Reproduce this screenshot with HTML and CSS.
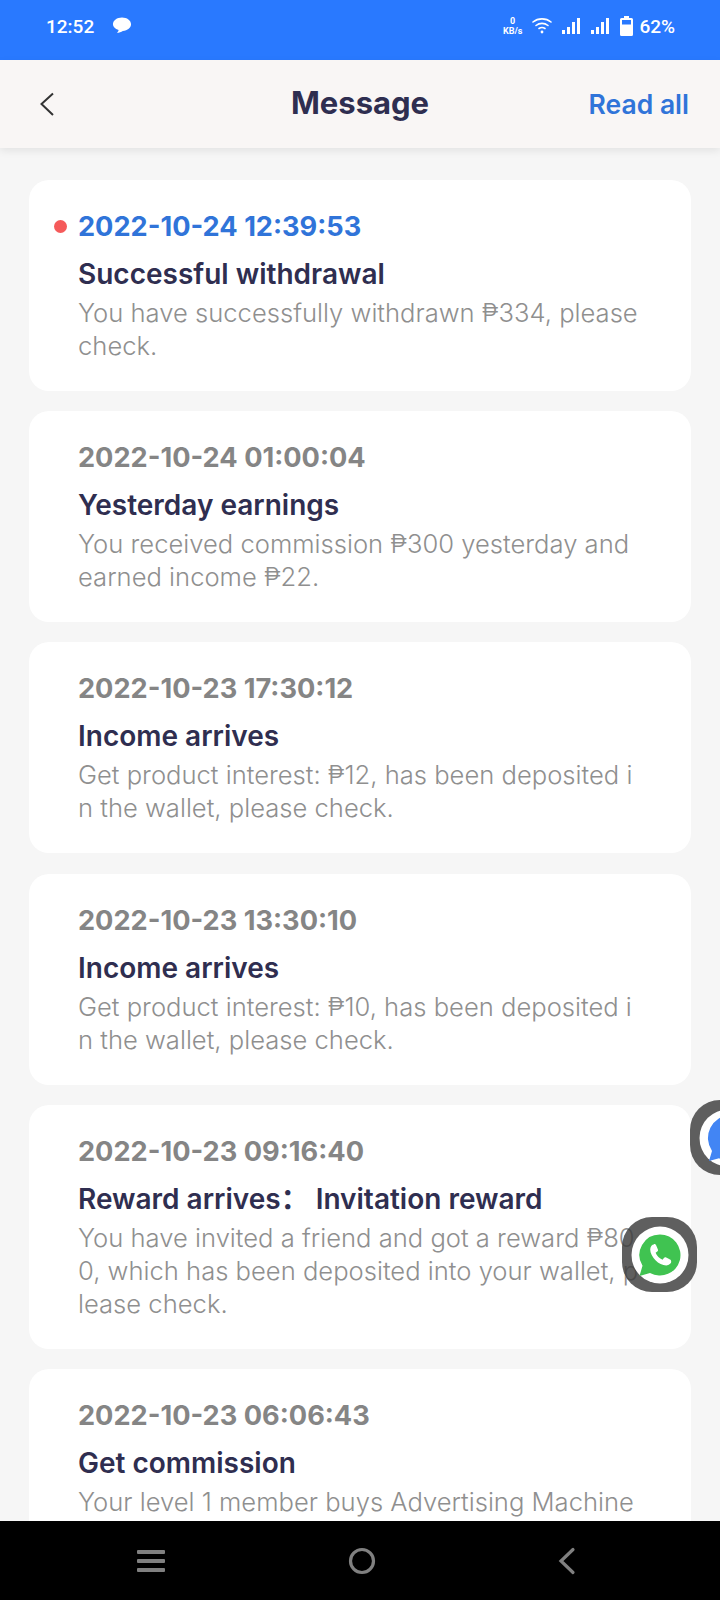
FILE: index.html
```html
<!DOCTYPE html>
<html lang="en">
<head>
    <meta charset="UTF-8">
    <meta name="viewport" content="width=device-width, initial-scale=1.0">
    <title>Message</title>
    <link rel="stylesheet" href="styles.css">
</head>
<body>
    <div class="screen">
        <div class="status-bar">
            <div class="status-left">
                <span class="clock">12:52</span>
                <svg class="chat-icon" width="20" height="19" viewBox="0 0 21 19"><path d="M10.500 1C15.700 1 20 4 20 8.200c0 3.600-3.600 6.600-8.600 7-1.800 1-3.800 1.800-6.200 2 1-.9 1.600-2 1.800-3C3 13 1 10.800 1 8.200 1 4 5.300 1 10.500 1z" fill="#fff"/></svg>
            </div>
            <div class="status-right">
                <span class="net-speed"><b>0</b><b>KB/s</b></span>
                <svg class="wifi-icon" width="20" height="18" viewBox="0 0 20 18" fill="none" stroke="#fff" stroke-width="1.600" stroke-linecap="round"><path d="M1 5C6 .8 14 .8 19 5"/><path d="M4 8.500C7.500 5.700 12.500 5.700 16 8.500"/><path d="M7 11.500c1.800-1.200 4.200-1.200 6 0"/><circle cx="10" cy="15" r="1.400" fill="#fff" stroke="none"/></svg>
                <svg class="signal-icon" width="19" height="18" viewBox="0 0 19 18" fill="#fff"><rect x="0" y="13" width="3" height="4"/><rect x="5" y="10" width="3" height="7"/><rect x="10" y="5" width="3" height="12"/><rect x="15" y="1" width="3" height="16"/></svg>
                <svg class="signal-icon" width="19" height="18" viewBox="0 0 19 18" fill="#fff"><rect x="0" y="13" width="3" height="4"/><rect x="5" y="10" width="3" height="7"/><rect x="10" y="5" width="3" height="12"/><rect x="15" y="1" width="3" height="16"/></svg>
                <svg class="battery-icon" width="13" height="20" viewBox="0 0 13 20"><path d="M4 0h5v2h2.500A1.500 1.500 0 0 1 13 3.500V18.500A1.500 1.500 0 0 1 11.500 20h-10A1.500 1.500 0 0 1 0 18.500V3.500A1.500 1.500 0 0 1 1.500 2H4z" fill="#fff"/><rect x="2" y="4" width="9" height="4.500" fill="#2979ff"/></svg>
                <span class="battery-text">62%</span>
            </div>
        </div>

        <div class="nav-bar">
            <svg class="back-icon" width="16" height="26" viewBox="0 0 16 26" fill="none" stroke="#333" stroke-width="2"><path d="M14 2.500L2.500 13 14 24"/></svg>
            <h1 class="nav-title">Message</h1>
            <a class="read-all">Read all</a>
        </div>

        <div class="msg-list">
            <div class="msg-card">
                <div class="msg-time unread">2022-10-24 12:39:53</div>
                <div class="msg-title">Successful withdrawal</div>
                <div class="msg-body">You have successfully withdrawn ₱334, please check.</div>
            </div>
            <div class="msg-card">
                <div class="msg-time">2022-10-24 01:00:04</div>
                <div class="msg-title">Yesterday earnings</div>
                <div class="msg-body">You received commission ₱300 yesterday and earned income ₱22.</div>
            </div>
            <div class="msg-card">
                <div class="msg-time">2022-10-23 17:30:12</div>
                <div class="msg-title">Income arrives</div>
                <div class="msg-body">Get product interest: ₱12, has been deposited in the wallet, please check.</div>
            </div>
            <div class="msg-card">
                <div class="msg-time">2022-10-23 13:30:10</div>
                <div class="msg-title">Income arrives</div>
                <div class="msg-body">Get product interest: ₱10, has been deposited in the wallet, please check.</div>
            </div>
            <div class="msg-card">
                <div class="msg-time">2022-10-23 09:16:40</div>
                <div class="msg-title">Reward arrives： Invitation reward</div>
                <div class="msg-body">You have invited a friend and got a reward ₱800, which has been deposited into your wallet, please check.</div>
            </div>
            <div class="msg-card">
                <div class="msg-time">2022-10-23 06:06:43</div>
                <div class="msg-title">Get commission</div>
                <div class="msg-body">Your level 1 member buys Advertising Machine and the commission</div>
            </div>
        </div>

        <div class="float-btn float-chat">
            <svg width="58" height="58" viewBox="0 0 58 58"><circle cx="29" cy="29" r="28.500" fill="#fff"/><path d="M31 6a23 23 0 1 1-11 43.200L10 52l3-10A23 23 0 0 1 31 6z" fill="#4285f4"/><circle cx="34" cy="27" r="10" fill="#d8dde6"/></svg>
        </div>
        <div class="float-btn float-whatsapp">
            <svg width="58" height="58" viewBox="0 0 58 58"><circle cx="29" cy="29" r="28.500" fill="#fff"/><path d="M29 8.500a20.500 20.500 0 1 1-10 38.400L8.500 50l3-10.200A20.500 20.500 0 0 1 29 8.500z" fill="#40c351"/><path d="M22.800 18.500c-1.400 0-3.600 2-3.600 4.900 0 7.400 8.800 16 16 16 3 0 5-2.200 5-3.600 0-1.100-.4-1.800-1.200-2.200l-3.800-2c-.9-.5-1.700-.3-2.300.5l-1.300 1.700c-3.200-1.300-5.700-3.800-7-7l1.700-1.300c.8-.6 1-1.400.5-2.300l-1.800-4.200c-.5-.8-.9-1.100-1.900-1.100z" fill="#fff"/></svg>
        </div>

        <div class="bottom-bar">
            <svg width="28" height="22" viewBox="0 0 28 22" fill="#808080"><rect y="0" width="28" height="4" rx="1"/><rect y="9" width="28" height="4" rx="1"/><rect y="18" width="28" height="4" rx="1"/></svg>
            <svg width="28" height="28" viewBox="0 0 28 28" fill="none" stroke="#808080" stroke-width="3.200"><circle cx="14" cy="14" r="11.500"/></svg>
            <svg width="18" height="28" viewBox="0 0 18 28" fill="none" stroke="#808080" stroke-width="3.200" stroke-linecap="round"><path d="M15 2.500L3 14l12 11.500"/></svg>
        </div>
    </div>
</body>
</html>
```

FILE: styles.css
```css
html, body {
    margin: 0;
    padding: 0;
}
body {
    font-family: Inter, "Noto Sans CJK SC", sans-serif;
    background-color: #f6f6f6;
}
.screen {
    position: relative;
    width: 720px;
    height: 1600px;
    overflow: hidden;
    display: flex;
    flex-direction: column;
    background-color: #f6f6f6;
}
.status-bar {
    height: 60px;
    flex-shrink: 0;
    background-color: #2979ff;
    color: white;
    display: flex;
    justify-content: space-between;
    align-items: center;
    padding: 0 45px 8px 46px;
    box-sizing: border-box;
}
.status-left, .status-right {
    display: flex;
    align-items: center;
}
.clock {
    font-family: Roboto, sans-serif;
    font-size: 19px;
    font-weight: 500;
}
.chat-icon {
    margin-left: 18px;
    margin-bottom: 2px;
}
.net-speed {
    display: flex;
    flex-direction: column;
    align-items: center;
    font-family: Roboto, sans-serif;
    font-size: 9px;
    line-height: 10px;
    margin-right: 10px;
}
.wifi-icon {
    margin-right: 10px;
}
.signal-icon {
    margin-right: 10px;
}
.battery-icon {
    margin-right: 6px;
}
.battery-text {
    font-family: Roboto, sans-serif;
    font-size: 19px;
    font-weight: 500;
}
.nav-bar {
    position: relative;
    height: 88px;
    flex-shrink: 0;
    background-color: #f9f6f5;
    box-shadow: 0 3px 8px rgba(0, 0, 0, 0.08);
    display: grid;
    grid-template-columns: 1fr auto 1fr;
    align-items: center;
    padding: 0 31px;
}
.back-icon {
    margin-left: 8px;
}
.nav-title {
    margin: -3px 0 0;
    font-size: 31px;
    font-weight: 700;
    color: #2f2e50;
}
.read-all {
    justify-self: end;
    font-size: 26.500px;
    font-weight: 600;
    color: #3074d9;
}
.msg-list {
    padding: 32px 29px 0;
    display: flex;
    flex-direction: column;
    gap: 20.200px;
}
.msg-card {
    background: white;
    border-radius: 20px;
    padding: 31px 49px 29px;
}
.msg-time {
    position: relative;
    font-size: 27.200px;
    font-weight: 700;
    line-height: 32px;
    color: #858585;
}
.msg-time.unread {
    color: #3074d9;
}
.msg-time.unread::before {
    content: "";
    position: absolute;
    left: -24px;
    top: 9px;
    width: 13px;
    height: 13px;
    border-radius: 50%;
    background-color: #f55a5a;
}
.msg-title {
    margin-top: 15px;
    font-size: 28px;
    font-weight: 600;
    line-height: 32px;
    color: #2f2e50;
}
.msg-body {
    margin-top: 6px;
    font-size: 25.600px;
    font-weight: 300;
    line-height: 33px;
    color: #8f8f8f;
    word-break: break-all;
}
.float-btn {
    position: absolute;
    width: 75px;
    height: 75px;
    border-radius: 30px;
    background: rgba(60, 60, 60, 0.82);
    display: flex;
    align-items: center;
    justify-content: center;
    overflow: hidden;
}
.float-chat {
    left: 690px;
    top: 1100px;
}
.float-whatsapp {
    left: 622px;
    top: 1217px;
}
.bottom-bar {
    position: absolute;
    left: 0;
    right: 0;
    bottom: 0;
    height: 79px;
    background-color: black;
    display: flex;
    justify-content: space-between;
    align-items: center;
    padding: 0 144px 0 137px;
}
```
